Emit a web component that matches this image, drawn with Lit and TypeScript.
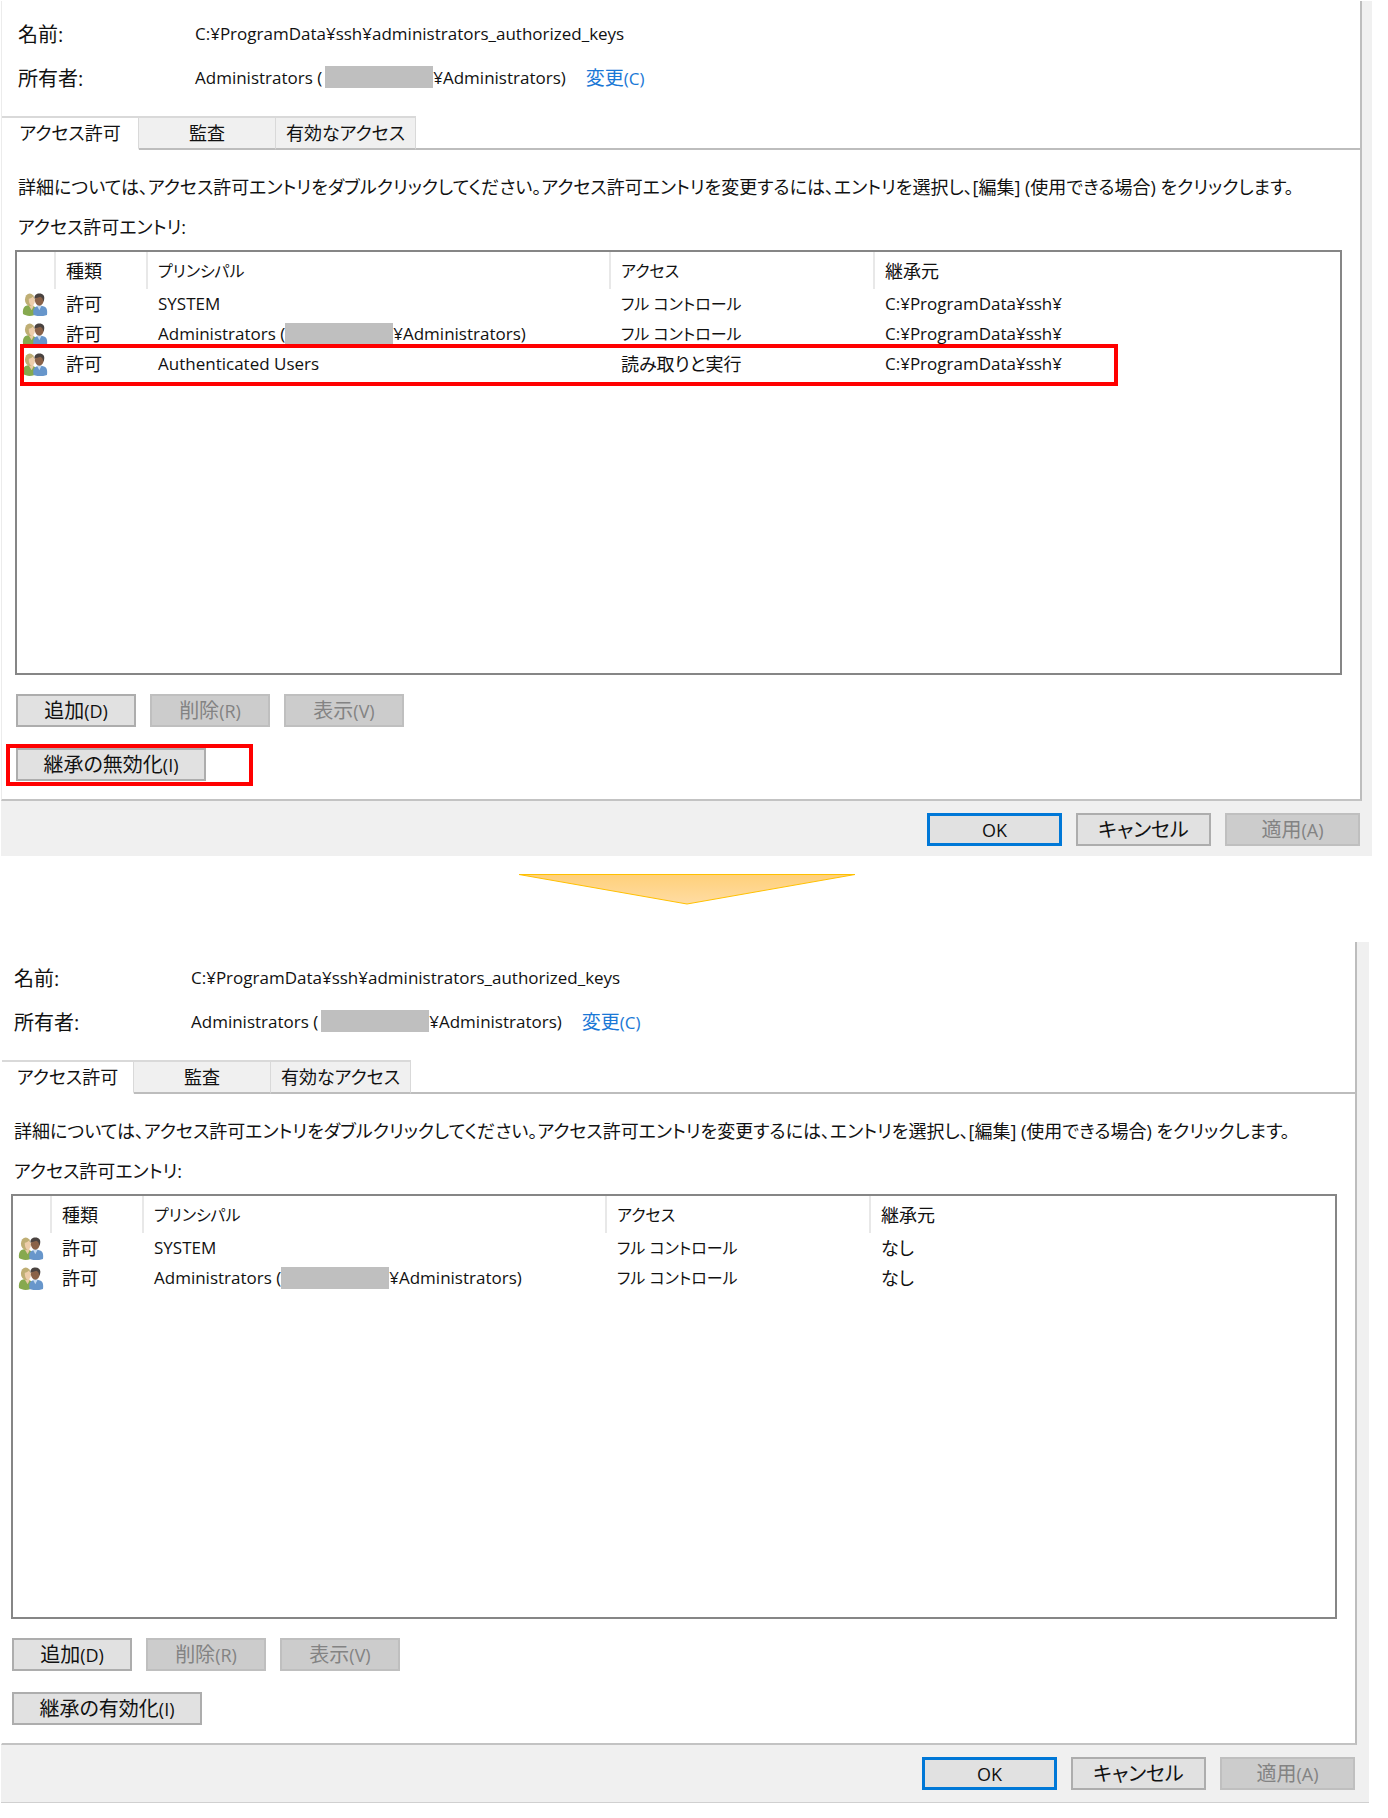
import { LitElement, html, css, svg, nothing } from "lit";
import { customElement, property } from "lit/decorators.js";
import { classMap } from "lit/directives/class-map.js";

interface Entry {
  principal: string;
  domainHidden?: boolean;
  access: string;
  source: string;
}

const peopleIcon = svg`
  <path d="M1 22c-.6-5 .5-8 4-9l5-1 4 3-1 8c-4 1.400-9 1.200-12-1z" fill="#86a94f"/>
  <path d="M7 13l3 5 2-4-1-3H7z" fill="#e9c9a4"/>
  <ellipse cx="8" cy="7" rx="5" ry="6.500" fill="#bfae74"/>
  <path d="M7 6c2 0 3-1 4-2 2 1 2.500 3 2.300 5-.3 2.500-1.600 4-3 4C8 13 7 10 7 6z" fill="#edcdab"/>
  <path d="M12 23c-1-5 0-8 3-9l4-1 4 1c3 1 3.600 4 3 9-4 1.600-10 1.600-14 0z" fill="#6796cb"/>
  <path d="M16 14l2 4 2-4-1-2h-3z" fill="#c5daf0"/>
  <ellipse cx="18" cy="7.500" rx="4.600" ry="5.800" fill="#8a6248"/>
  <path d="M13 6c-.4-4 2-5.500 5-5.500 4 0 6 2.500 5 6.500l-1 2c0-3-1-4-3-5-2 1-4 1-6 2z" fill="#4a4340"/>`;

@customElement("permission-dialog")
export class PermissionDialog extends LitElement {
  static styles = css`
    :host {
      display: block;
      --lead: 16px;
      --strip: 10px;
      color: #111;
      font-family: "Open Sans", "Noto Sans CJK JP", sans-serif;
      font-size: 20px;
      font-feature-settings: "palt";
    }
    :host([compact]) { --lead: 12px; --strip: 12px; }
    .dialog { background: #f0f0f0; padding-right: var(--strip); }
    .page {
      box-sizing: border-box;
      background: #fff;
      border-right: 2px solid #bdbdbd;
      border-bottom: 2px solid #c3c3c3;
      border-left: 1px solid #ececec;
      padding: 10px 0 18px;
    }
    :host([compact]) .page { border-left-color: #fff; padding-top: 13px; }
    .facts { margin: 0 0 17px; padding-left: var(--lead); }
    .fact { display: flex; align-items: center; height: 44px; }
    .fact dt { width: 177px; }
    .fact dd { margin: 0; display: flex; align-items: center; }
    .latin { font-size: 17px; }
    .principal { display: inline-flex; align-items: center; white-space: nowrap; }
    .mask { width: 108px; height: 22px; background: #bfbfbf; }
    .facts .mask { margin-left: 3px; }
    .change { color: #1a78d6; text-decoration: none; margin-left: 20px; font-size: 19px; }
    .tabs { display: flex; height: 34px; }
    .tabs::after { content: ""; flex: 1; border-bottom: 2px solid #bdbdbd; }
    .tab {
      box-sizing: border-box;
      width: 137px;
      padding: 0;
      border: 0 solid #d9d9d9;
      border-width: 2px 1px 0 0;
      border-bottom: 2px solid #bdbdbd;
      background: #f0f0f0;
      color: inherit;
      font: inherit;
      font-size: 18px;
      font-feature-settings: inherit;
      line-height: 26px;
      white-space: nowrap;
    }
    .tab:last-child { width: 140px; }
    .tab.active { background: #fff; border-bottom-color: #fff; }
    :host([compact]) .tab.active { width: 132px; }
    .body { padding: 17px 18px 0 calc(var(--lead) - 3px); }
    .note { margin: 0 0 0 3px; line-height: 40px; font-size: 18px; }
    .list {
      position: relative;
      box-sizing: border-box;
      min-height: 425px;
      margin-top: 3px;
      border: 2px solid #868686;
    }
    .entries { width: 100%; table-layout: fixed; border-collapse: collapse; font-size: 18px; }
    .entries th, .entries td {
      box-sizing: border-box;
      padding: 0 0 0 10px;
      text-align: left;
      font-weight: 400;
      white-space: nowrap;
      line-height: 26px;
    }
    .entries th { height: 37px; border-left: 2px solid #e8e8e8; }
    .entries th:first-child { border-left: 0; }
    .entries td { height: 30px; padding-left: 11px; }
    .entries td.who { padding-left: 5px; }
    .entries .text { font-size: 17px; }
    .entries .kana { font-size: 16px; }
    .c-icon { width: 38px; }
    .c-type { width: 92px; }
    .c-name { width: 463px; }
    .c-access { width: 264px; }
    .people { display: block; width: 26px; height: 23px; }
    .frame { position: absolute; box-sizing: border-box; border: 4px solid #f00; pointer-events: none; }
    .frame.row { left: 3px; right: 222px; top: 92px; height: 42px; }
    .frame.inherit { left: -10px; width: 247px; top: -4px; height: 42px; }
    .buttons { display: flex; gap: 14px; margin: 19px 0 0 1px; }
    .second { position: relative; margin-top: 21px; }
    .button {
      box-sizing: border-box;
      height: 33px;
      width: 120px;
      padding: 0;
      border: 2px solid #adadad;
      background: #e1e1e1;
      color: #111;
      font: inherit;
      font-feature-settings: inherit;
      line-height: 26px;
    }
    .button.wide { width: 190px; }
    .button:disabled { background: #ccc; border-color: #bfbfbf; color: #838383; }
    .button .latin { font-size: 18px; }
    .footer { display: flex; justify-content: flex-end; gap: 14px; padding: 12px 2px 10px 0; }
    .footer .button { width: 135px; }
    .footer .button.primary { border: 3px solid #0078d7; font-size: 18px; }
    :host([compact]) .footer {
      margin-right: calc(0px - var(--strip));
      padding-right: calc(var(--strip) + 2px);
      padding-bottom: 12px;
      border-bottom: 1px solid #d0d0d0;
    }
  `;

  @property({ attribute: false }) entries: Entry[] = [];
  @property() inheritLabel = "";
  @property({ type: Boolean }) highlight = false;
  @property({ type: Boolean, reflect: true }) compact = false;

  private principal(name: string, hidden = false) {
    return hidden
      ? html`<span class="principal">${name} (<span class="mask"></span>¥${name})</span>`
      : name;
  }

  private key(label: string, letter: string) {
    return html`${label}<span class="latin">(${letter})</span>`;
  }

  /** Picks the text size by script: Latin, katakana only, or mixed Japanese. */
  private script(value: string) {
    return /^[\x20-\x7e¥]+$/.test(value) ? "text" : /^[ァ-ー ]+$/.test(value) ? "kana" : "";
  }

  render() {
    const tabs = ["アクセス許可", "監査", "有効なアクセス"];
    const columns = ["", "種類", "プリンシパル", "アクセス", "継承元"];
    return html`
      <section class="dialog">
        <div class="page">
          <dl class="facts">
            <div class="fact"><dt>名前:</dt><dd class="latin">C:¥ProgramData¥ssh¥administrators_authorized_keys</dd></div>
            <div class="fact"><dt>所有者:</dt>
              <dd class="latin">${this.principal("Administrators", true)}<a class="change" href="#">${this.key("変更", "C")}</a></dd>
            </div>
          </dl>
          <div class="tabs" role="tablist">
            ${tabs.map((t, i) => html`<button role="tab" aria-selected=${i === 0 ? "true" : "false"} class=${classMap({ tab: true, active: i === 0 })}>${t}</button>`)}
          </div>
          <div class="body">
            <p class="note">詳細については、アクセス許可エントリをダブルクリックしてください。アクセス許可エントリを変更するには、エントリを選択し、[編集] (使用できる場合) をクリックします。</p>
            <p class="note" id="caption">アクセス許可エントリ:</p>
            <div class="list">
              <table class="entries" aria-labelledby="caption">
                <colgroup><col class="c-icon"><col class="c-type"><col class="c-name"><col class="c-access"><col></colgroup>
                <thead><tr>${columns.map(c => html`<th class=${this.script(c)}>${c}</th>`)}</tr></thead>
                <tbody>
                  ${this.entries.map(e => html`<tr>
                    <td class="who"><svg class="people" viewBox="0 0 27 24" aria-hidden="true">${peopleIcon}</svg></td>
                    <td>許可</td>
                    <td class="text">${this.principal(e.principal, e.domainHidden)}</td>
                    <td class=${this.script(e.access)}>${e.access}</td>
                    <td class=${this.script(e.source)}>${e.source}</td>
                  </tr>`)}
                </tbody>
              </table>
              ${this.highlight ? html`<div class="frame row"></div>` : nothing}
            </div>
            <div class="buttons">
              <button class="button">${this.key("追加", "D")}</button>
              <button class="button" disabled>${this.key("削除", "R")}</button>
              <button class="button" disabled>${this.key("表示", "V")}</button>
            </div>
            <div class="buttons second">
              <button class="button wide">${this.key(this.inheritLabel, "I")}</button>
              ${this.highlight ? html`<div class="frame inherit"></div>` : nothing}
            </div>
          </div>
        </div>
        <div class="footer">
          <button class="button primary">OK</button>
          <button class="button">キャンセル</button>
          <button class="button" disabled>${this.key("適用", "A")}</button>
        </div>
      </section>`;
  }
}

@customElement("app-root")
export class AppRoot extends LitElement {
  static styles = css`
    :host { display: block; background: #fff; overflow: hidden; }
    .before { display: block; margin: 1px 16px 0 1px; }
    .after { display: block; margin: 0 19px 16px 1px; }
    .step { display: flex; justify-content: center; height: 69px; padding-top: 17px; margin-right: 15px; }
    .arrow { width: 340px; height: 32px; }
  `;

  private before: Entry[] = [
    { principal: "SYSTEM", access: "フル コントロール", source: "C:¥ProgramData¥ssh¥" },
    { principal: "Administrators", domainHidden: true, access: "フル コントロール", source: "C:¥ProgramData¥ssh¥" },
    { principal: "Authenticated Users", access: "読み取りと実行", source: "C:¥ProgramData¥ssh¥" },
  ];

  private after: Entry[] = [
    { principal: "SYSTEM", access: "フル コントロール", source: "なし" },
    { principal: "Administrators", domainHidden: true, access: "フル コントロール", source: "なし" },
  ];

  render() {
    return html`
      <permission-dialog class="before" .entries=${this.before} .inheritLabel=${"継承の無効化"} highlight></permission-dialog>
      <div class="step">
        <svg class="arrow" viewBox="0 0 340 32" aria-hidden="true">
          <defs><linearGradient id="fade" x1="0" y1="0" x2="0" y2="1">
            <stop offset="0" stop-color="#ffd07a"/><stop offset="1" stop-color="#ffdca3"/>
          </linearGradient></defs>
          <path d="M2 1.500h336L170 31z" fill="url(#fade)" stroke="#ffc000" stroke-width="1" stroke-linejoin="round"/>
        </svg>
      </div>
      <permission-dialog class="after" .entries=${this.after} .inheritLabel=${"継承の有効化"} compact></permission-dialog>`;
  }
}
